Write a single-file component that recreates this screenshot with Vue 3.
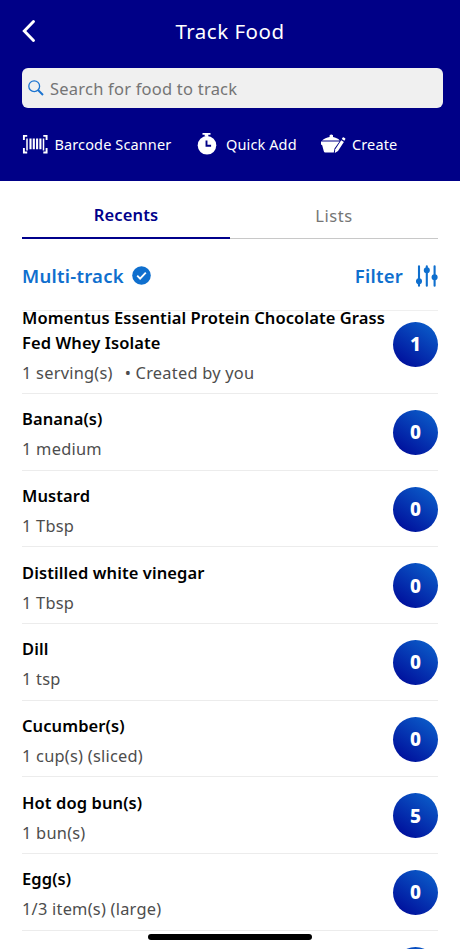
<script setup>
const foods = [
  { name: 'Momentus Essential Protein Chocolate Grass Fed Whey Isolate', serving: '1 serving(s)', note: '• Created by you', count: 1, tall: true },
  { name: 'Banana(s)', serving: '1 medium', count: 0 },
  { name: 'Mustard', serving: '1 Tbsp', count: 0 },
  { name: 'Distilled white vinegar', serving: '1 Tbsp', count: 0 },
  { name: 'Dill', serving: '1 tsp', count: 0 },
  { name: 'Cucumber(s)', serving: '1 cup(s) (sliced)', count: 0 },
  { name: 'Hot dog bun(s)', serving: '1 bun(s)', count: 5 },
  { name: 'Egg(s)', serving: '1/3 item(s) (large)', count: 0 },
  { name: '', serving: '', count: '' }
]
</script>

<template>
  <div class="screen">
    <header class="header">
      <div class="titlebar">
        <svg class="back" width="16" height="24" viewBox="0 0 16 24"><path d="M11.500 2.500 2.300 12l9.200 9.500" fill="none" stroke="#fff" stroke-width="2.9" stroke-linecap="round" stroke-linejoin="miter" /></svg>
        <h1>Track Food</h1>
      </div>
      <div class="search">
        <svg width="18" height="18" viewBox="0 0 18 18" fill="none" stroke="#1c74d0"><circle cx="7.2" cy="7.2" r="5.4" stroke-width="1.3" /><path d="m11 11 5 5" stroke-width="1.9" /></svg>
        <span>Search for food to track</span>
      </div>
      <nav class="actions">
        <div class="action barcode">
          <svg width="26" height="20" viewBox="0 0 26 20" fill="none" stroke="#fff"><path d="M5.200 1.900H1.900V6M21.300 1.900h3.300V6M5.200 18.500H1.900V14M21.300 18.500h3.300V14" stroke-width="1.900" /><path d="M5 4.500v12M21.500 4.500v12" stroke-width="1.500" /><path d="M8.500 4.500v10.800M11.800 4.500v10.800M15.100 4.500v10.800M18.400 4.500v10.800" stroke-width="2.100" /></svg>
          <span>Barcode Scanner</span>
        </div>
        <div class="action quick">
          <svg width="20" height="22" viewBox="0 0 20 22"><path d="M5.500 0h8v1.800h-2.200v2h-3.600v-2H5.500z" fill="#fff" /><circle cx="10" cy="12.300" r="9.300" fill="#fff" /><path d="M9.500 7.500v5.300h4.600" fill="none" stroke="#000087" stroke-width="1.900" /></svg>
          <span>Quick Add</span>
        </div>
        <div class="action create">
          <svg width="25" height="20" viewBox="0 0 25 20" fill="#fff"><path d="M1 6.400C3 4.600 5.800 3.400 8.600 3V1.200Q10.300 0 12 1.200V3c2.500.4 5 1.500 6.800 3.400z" /><path d="M0 7.400h18.500l-5 7.200-.7 4H4.300Q3.100 18.600 2.800 17.300L1.200 11.200 0 10.500z" /><path d="m14.300 15.200 5.900-9 2.700 1.800-5.900 9-3.200 1.900z" /><path d="m20.800 4.900.9-1.300q.5-.6 1.200-.1l1.200.8q.6.500.1 1.200l-.9 1.200z" /></svg>
          <span>Create</span>
        </div>
      </nav>
    </header>

    <div class="tabs">
      <div class="tab active"><span>Recents</span></div>
      <div class="tab lists"><span>Lists</span></div>
    </div>

    <div class="tools">
      <div class="tool multi">
        <span>Multi-track</span>
        <svg width="19" height="19" viewBox="0 0 19 19"><circle cx="9.500" cy="9.500" r="9.300" fill="#0f6fce" /><path d="m5.200 9.700 2.900 2.900 5.700-6" fill="none" stroke="#fff" stroke-width="1.900" /></svg>
      </div>
      <div class="tool filter">
        <span>Filter</span>
        <svg width="22" height="22" viewBox="0 0 22 22" fill="#0f6fce" stroke="#0f6fce" stroke-width="2.100" stroke-linecap="round"><path d="M3 1.200v19.600M10.800 1.200v19.600M18.600 1.200v19.600" /><circle cx="3" cy="16.300" r="2" /><circle cx="10.800" cy="5.200" r="2" /><circle cx="18.600" cy="12.300" r="2" /></svg>
      </div>
    </div>

    <ul class="foods">
      <li v-for="(food, i) in foods" :key="i" :class="{ tall: food.tall }">
        <div class="info">
          <div class="name">{{ food.name }}</div>
          <div class="serving"><span>{{ food.serving }}</span><span v-if="food.note" class="note">{{ food.note }}</span></div>
        </div>
        <div class="count">{{ food.count }}</div>
      </li>
    </ul>
    <div class="home-indicator"></div>
  </div>
</template>

<style>
body { background: #fff; }
</style>

<style scoped>
* { box-sizing: border-box; }
.screen { position: relative; width: 460px; height: 949px; overflow: hidden; background: #fff; font-family: "Noto Sans", sans-serif; color: #000; }
svg { display: block; flex: none; }
.header { height: 180.500px; background: #000087; color: #fff; padding: 0 17px 0 22px; }
.titlebar { height: 68px; display: grid; grid-template-columns: 16px 1fr 21px; align-items: center; padding-bottom: 6px; }
h1 { margin: 0; font-size: 20.500px; font-weight: 400; letter-spacing: .5px; text-align: center; }
.search { height: 40px; border-radius: 6px; background: #f0f0f0; color: #757575; display: flex; align-items: center; gap: 5px; padding-left: 5px; font-size: 16.500px; letter-spacing: .22px; }
.actions { display: flex; height: 71px; align-items: center; font-size: 14.500px; letter-spacing: .12px; }
.action { display: flex; align-items: center; white-space: nowrap; }
.barcode { width: 175px; gap: 6.500px; }
.quick { width: 124px; gap: 9px; }
.create { gap: 6px; }
.tabs { display: flex; margin: 0 22px; height: 58.500px; border-bottom: 1px solid #c8c8c8; font-size: 16.500px; color: #757575; }
.tab { flex: 1; height: 58.500px; display: flex; justify-content: center; align-items: center; padding-top: 11.500px; }
.lists { letter-spacing: .6px; }
.active { color: #00008b; font-weight: 600; border-bottom: 2px solid #00008b; letter-spacing: .15px; }
.tools { height: 72px; margin: 0 22px; display: flex; justify-content: space-between; align-items: center; color: #0f6fce; font-size: 18.500px; font-weight: 600; padding-top: 2px; border-bottom: 1px solid #efefef; }
.tool { display: flex; align-items: center; gap: 13px; letter-spacing: .25px; }
.multi { gap: 8.500px; }
.foods { list-style: none; margin: 0 22px; padding: 0; }
li { height: 76.700px; border-bottom: 1px solid #ececec; display: flex; justify-content: space-between; align-items: center; padding-top: 1px; }
.info { flex: none; width: 371px; padding-top: 4px; }
.tall { height: 83px; padding: 0 0 16px; }
.tall .info { padding-top: 3px; }
.name { font-size: 16.500px; line-height: 24.500px; font-weight: 600; min-height: 24.500px; letter-spacing: .09px; }
.serving { margin-top: 5.500px; font-size: 16.400px; line-height: 24px; min-height: 24px; color: #4d4d4d; white-space: pre; letter-spacing: .23px; }
.note { margin-left: 12px; }
.count { width: 45px; height: 45px; border-radius: 50%; background: linear-gradient(215deg, #0b60cb 5%, #00109c 88%); color: #fff; font-size: 19px; font-weight: 800; display: flex; align-items: center; justify-content: center; flex: none; }
.home-indicator { position: absolute; left: 148px; top: 934px; width: 164px; height: 6px; border-radius: 3px; background: #000; }
</style>
